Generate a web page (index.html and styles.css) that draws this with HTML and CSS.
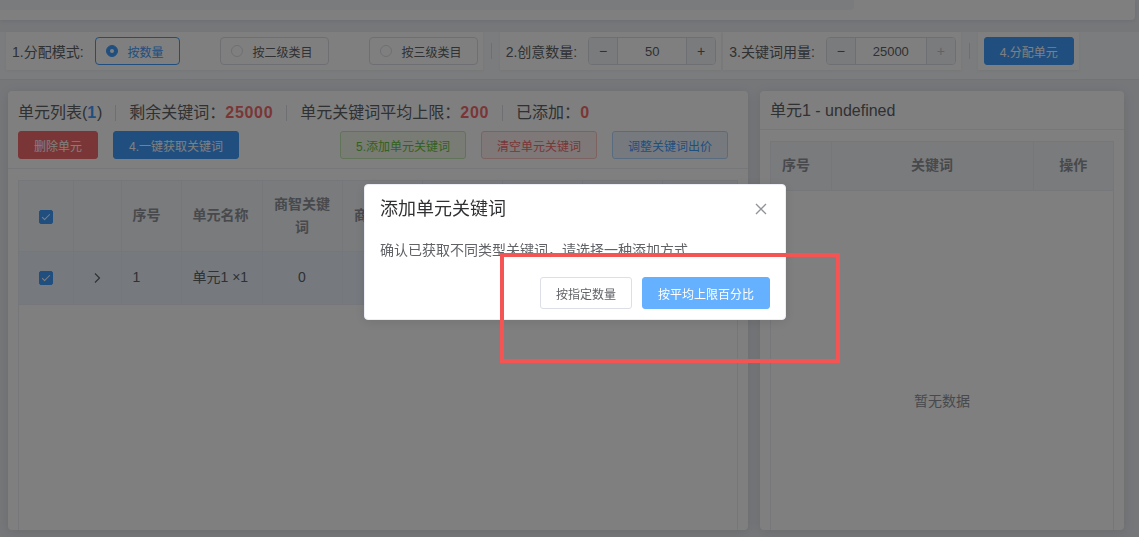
FILE: index.html
```html
<!DOCTYPE html>
<html lang="zh-CN">
<head>
    <meta charset="UTF-8">
    <title>单元分配</title>
    <link rel="stylesheet" href="styles.css">
</head>
<body>
    <div class="top-card">
        <div class="top-inner"></div>
    </div>

    <div class="toolbar">
        <div class="tool-group">
            <span class="tool-label">1.分配模式:</span>
            <label class="radio is-checked"><span class="radio-dot"></span>按数量</label>
            <label class="radio"><span class="radio-dot"></span>按二级类目</label>
            <label class="radio"><span class="radio-dot"></span>按三级类目</label>
        </div>
        <span class="tool-sep"></span>
        <div class="tool-group">
            <span class="tool-label">2.创意数量:</span>
            <div class="stepper">
                <span class="step-btn">−</span>
                <span class="step-val">50</span>
                <span class="step-btn">+</span>
            </div>
        </div>
        <div class="tool-group tool-group-next">
            <span class="tool-label">3.关键词用量:</span>
            <div class="stepper stepper-wide">
                <span class="step-btn">−</span>
                <span class="step-val">25000</span>
                <span class="step-btn is-disabled">+</span>
            </div>
        </div>
        <span class="tool-sep"></span>
        <div class="tool-group">
            <span class="btn btn-primary">4.分配单元</span>
        </div>
    </div>

    <div class="main">
        <div class="card card-left">
            <div class="card-head">
                <div class="summary">
                    <span>单元列表(<b class="num-blue">1</b>)</span>
                    <span class="sep"></span>
                    <span>剩余关键词：<b class="num">25000</b></span>
                    <span class="sep"></span>
                    <span>单元关键词平均上限：<b class="num">200</b></span>
                    <span class="sep"></span>
                    <span>已添加：<b class="num">0</b></span>
                </div>
                <div class="actions">
                    <div class="btn-row">
                        <span class="btn btn-danger">删除单元</span>
                        <span class="btn btn-primary">4.一键获取关键词</span>
                    </div>
                    <div class="btn-row">
                        <span class="btn btn-success-plain">5.添加单元关键词</span>
                        <span class="btn btn-danger-plain">清空单元关键词</span>
                        <span class="btn btn-primary-plain">调整关键词出价</span>
                    </div>
                </div>
            </div>
            <div class="card-body">
                <div class="table-wrap">
                    <table class="grid">
                        <colgroup>
                            <col class="w54"><col class="w48"><col class="w60"><col class="w81">
                            <col class="w80"><col class="w80"><col class="w80"><col class="w80"><col class="w80"><col>
                        </colgroup>
                        <tr class="head head-tall">
                            <th class="center"><span class="checkbox"></span></th>
                            <th></th>
                            <th>序号</th>
                            <th>单元名称</th>
                            <th class="center">商智关键词</th>
                            <th class="center">商品词数</th>
                            <th></th>
                            <th></th>
                            <th></th>
                            <th></th>
                        </tr>
                        <tr class="row is-current">
                            <td class="center"><span class="checkbox"></span></td>
                            <td class="center">
                                <svg class="expand" width="8" height="12" viewBox="0 0 8 12"><polyline points="2,1.5 6.5,6 2,10.5" fill="none" stroke="#606266" stroke-width="1.2"/></svg>
                            </td>
                            <td>1</td>
                            <td>单元1 ×1</td>
                            <td class="center">0</td>
                            <td></td>
                            <td></td>
                            <td></td>
                            <td></td>
                            <td></td>
                        </tr>
                    </table>
                </div>
            </div>
        </div>

        <div class="card card-right">
            <div class="card-title">单元1 - undefined</div>
            <div class="card-body">
                <div class="table-wrap">
                    <table class="grid">
                        <colgroup>
                            <col class="w60"><col><col class="w80">
                        </colgroup>
                        <tr class="head">
                            <th>序号</th>
                            <th class="center">关键词</th>
                            <th class="center">操作</th>
                        </tr>
                    </table>
                    <div class="empty">暂无数据</div>
                </div>
            </div>
        </div>
    </div>

    <div class="mask"></div>

    <div class="msgbox">
        <div class="msgbox-head">
            <span class="msgbox-title">添加单元关键词</span>
            <svg class="msgbox-close" width="12" height="12" viewBox="0 0 12 12"><path d="M1 1 L11 11 M11 1 L1 11" stroke="#909399" stroke-width="1.3" fill="none"/></svg>
        </div>
        <div class="msgbox-content">确认已获取不同类型关键词，请选择一种添加方式</div>
        <div class="msgbox-btns">
            <span class="btn btn-small">按指定数量</span>
            <span class="btn btn-small btn-light">按平均上限百分比</span>
        </div>
    </div>

    <div class="mark"></div>
</body>
</html>
```

FILE: styles.css
```css
* {
    box-sizing: border-box;
}

body {
    margin: 0;
    height: 537px;
    overflow: hidden;
    background-color: #eceef3;
    color: #606266;
    font-family: "Liberation Sans", "Noto Sans CJK SC", sans-serif;
    font-size: 14px;
}

/* top strip (card scrolled off) */
.top-card {
    width: 1135px;
    height: 20px;
    background-color: #fff;
    border-radius: 0 0 4px 0;
    box-shadow: 0 1px 4px rgba(0, 0, 0, 0.08);
}

.top-inner {
    width: 854px;
    height: 10px;
    background-color: #f5f7fa;
    border-radius: 0 0 4px 0;
}

/* toolbar */
.toolbar {
    display: flex;
    align-items: center;
    margin-top: 12px;
    padding: 0 6px 9px;
    background-color: #f7f8fa;
    border-bottom: 1px solid #e4e7ed;
}

.tool-group {
    display: flex;
    align-items: center;
    height: 38px;
    padding: 0 5px 0 6px;
    background-color: #fff;
    box-shadow: 0 1px 3px rgba(0, 0, 0, 0.05);
}

.tool-group-next {
    margin-left: 2px;
}

.tool-label {
    margin-right: 11px;
    font-size: 14px;
    color: #606266;
}

.tool-sep {
    width: 1px;
    height: 16px;
    margin: 0 8px;
    background-color: #dcdfe6;
}

.radio {
    display: flex;
    align-items: center;
    height: 28px;
    padding: 0 15px 0 10px;
    border: 1px solid #dcdfe6;
    border-radius: 4px;
    font-size: 12px;
    color: #606266;
}

.radio + .radio {
    margin-left: 40px;
}

.radio-dot {
    position: relative;
    width: 12px;
    height: 12px;
    margin-right: 10px;
    border: 1px solid #dcdfe6;
    border-radius: 50%;
    background-color: #fff;
}

.radio.is-checked {
    border-color: #409eff;
    color: #409eff;
}

.radio.is-checked .radio-dot {
    border-color: #409eff;
    background-color: #409eff;
}

.radio.is-checked .radio-dot::after {
    content: "";
    position: absolute;
    left: 3px;
    top: 3px;
    width: 4px;
    height: 4px;
    border-radius: 50%;
    background-color: #fff;
}

.stepper {
    display: flex;
    width: 128px;
    height: 28px;
    border: 1px solid #dcdfe6;
    border-radius: 4px;
    overflow: hidden;
}

.stepper-wide {
    width: 130px;
}

.step-btn {
    display: flex;
    align-items: center;
    justify-content: center;
    width: 29px;
    background-color: #f5f7fa;
    color: #606266;
    font-size: 14px;
}

.step-btn:first-child {
    border-right: 1px solid #dcdfe6;
}

.step-btn:last-child {
    border-left: 1px solid #dcdfe6;
}

.step-btn.is-disabled {
    color: #c0c4cc;
}

.step-val {
    flex: 1;
    display: flex;
    align-items: center;
    justify-content: center;
    background-color: #fff;
    font-size: 13px;
    color: #606266;
}

/* buttons */
.btn {
    display: inline-flex;
    align-items: center;
    justify-content: center;
    height: 28px;
    padding: 0 15px;
    border: 1px solid #dcdfe6;
    border-radius: 3px;
    background-color: #fff;
    color: #606266;
    font-size: 12px;
    white-space: nowrap;
}

.btn-primary {
    background-color: #409eff;
    border-color: #409eff;
    color: #fff;
}

.btn-danger {
    background-color: #f56c6c;
    border-color: #f56c6c;
    color: #fff;
}

.btn-success-plain {
    background-color: #f0f9eb;
    border-color: #c2e7b0;
    color: #67c23a;
}

.btn-danger-plain {
    background-color: #fef0f0;
    border-color: #fbc4c4;
    color: #f56c6c;
}

.btn-primary-plain {
    background-color: #ecf5ff;
    border-color: #b3d8ff;
    color: #409eff;
}

/* main cards */
.main {
    display: flex;
    gap: 12px;
    padding: 11px 8px 0;
}

.card {
    display: flex;
    flex-direction: column;
    height: 439px;
    background-color: #fff;
    border-radius: 4px;
    box-shadow: 0 2px 12px rgba(0, 0, 0, 0.1);
    overflow: hidden;
}

.card-left {
    width: 740px;
}

.card-right {
    width: 364px;
}

.card-head {
    padding: 11px 10px 9px;
    border-bottom: 1px solid #ebeef5;
}

.summary {
    display: flex;
    align-items: center;
    font-size: 16px;
    line-height: 22px;
    color: #606266;
}

.summary .sep {
    width: 1px;
    height: 16px;
    margin: 0 13px;
    background-color: #dcdfe6;
}

.num,
.num-blue {
    letter-spacing: 0.7px;
}

.num {
    color: #f56c6c;
}

.num-blue {
    color: #409eff;
}

.actions {
    display: flex;
    justify-content: space-between;
    margin-top: 7px;
    padding-right: 10px;
}

.btn-row {
    display: flex;
}

.btn-row .btn + .btn {
    margin-left: 15px;
}

.card-title {
    padding: 9px 10px 7px;
    border-bottom: 1px solid #ebeef5;
    font-size: 16px;
    line-height: 22px;
    color: #606266;
}

.card-body {
    flex: 1;
    display: flex;
    flex-direction: column;
    padding: 11px 10px 0;
}

/* tables */
.table-wrap {
    flex: 1;
    border: 1px solid #ebeef5;
    border-bottom: 0;
}

.grid {
    width: 100%;
    border-collapse: collapse;
    table-layout: fixed;
}

.w48 { width: 48px; }
.w54 { width: 54px; }
.w60 { width: 60px; }
.w80 { width: 80px; }
.w81 { width: 81px; }

.grid th,
.grid td {
    padding: 0 11px;
    border-right: 1px solid #ebeef5;
    border-bottom: 1px solid #ebeef5;
    line-height: 23px;
    text-align: left;
    vertical-align: middle;
}

.grid th:last-child,
.grid td:last-child {
    border-right: 0;
}

.grid th {
    height: 48px;
    background-color: #f5f7fa;
    color: #909399;
    font-weight: bold;
}

.grid .head-tall th {
    height: 70px;
}

.grid td {
    height: 53px;
    color: #606266;
}

.grid .center {
    text-align: center;
}

.row.is-current td {
    background-color: #ecf5ff;
}

.checkbox {
    position: relative;
    display: inline-block;
    width: 14px;
    height: 14px;
    vertical-align: middle;
    border: 1px solid #409eff;
    border-radius: 2px;
    background-color: #409eff;
}

.checkbox::after {
    content: "";
    position: absolute;
    left: 4px;
    top: 1px;
    width: 3px;
    height: 7px;
    border: 1px solid #fff;
    border-left: 0;
    border-top: 0;
    transform: rotate(45deg);
}

.expand {
    vertical-align: middle;
}

.empty {
    padding-top: 198px;
    line-height: 24px;
    text-align: center;
    color: #909399;
}

/* modal */
.mask {
    position: fixed;
    inset: 0;
    z-index: 10;
    background-color: #000;
    opacity: 0.5;
}

.msgbox {
    position: fixed;
    left: 364px;
    top: 184px;
    z-index: 11;
    width: 422px;
    padding-bottom: 10px;
    background-color: #fff;
    border: 1px solid #ebeef5;
    border-radius: 4px;
    box-shadow: 0 2px 12px rgba(0, 0, 0, 0.1);
}

.msgbox-head {
    position: relative;
    padding: 15px 15px 10px;
}

.msgbox-title {
    display: block;
    font-size: 18px;
    line-height: 18px;
    color: #303133;
}

.msgbox-close {
    position: absolute;
    right: 18px;
    top: 18px;
}

.msgbox-content {
    padding: 10px 15px;
    font-size: 14px;
    line-height: 24px;
    color: #606266;
}

.msgbox-btns {
    display: flex;
    justify-content: flex-end;
    padding: 5px 15px 0;
}

.btn-small {
    height: 32px;
    padding: 0 15px;
}

.msgbox-btns .btn + .btn {
    margin-left: 10px;
}

.btn-light {
    background-color: #66b1ff;
    border-color: #66b1ff;
    color: #fff;
}

/* red annotation frame */
.mark {
    position: fixed;
    left: 500px;
    top: 253px;
    z-index: 12;
    width: 340px;
    height: 110px;
    border: 4px solid #f45454;
}
```
